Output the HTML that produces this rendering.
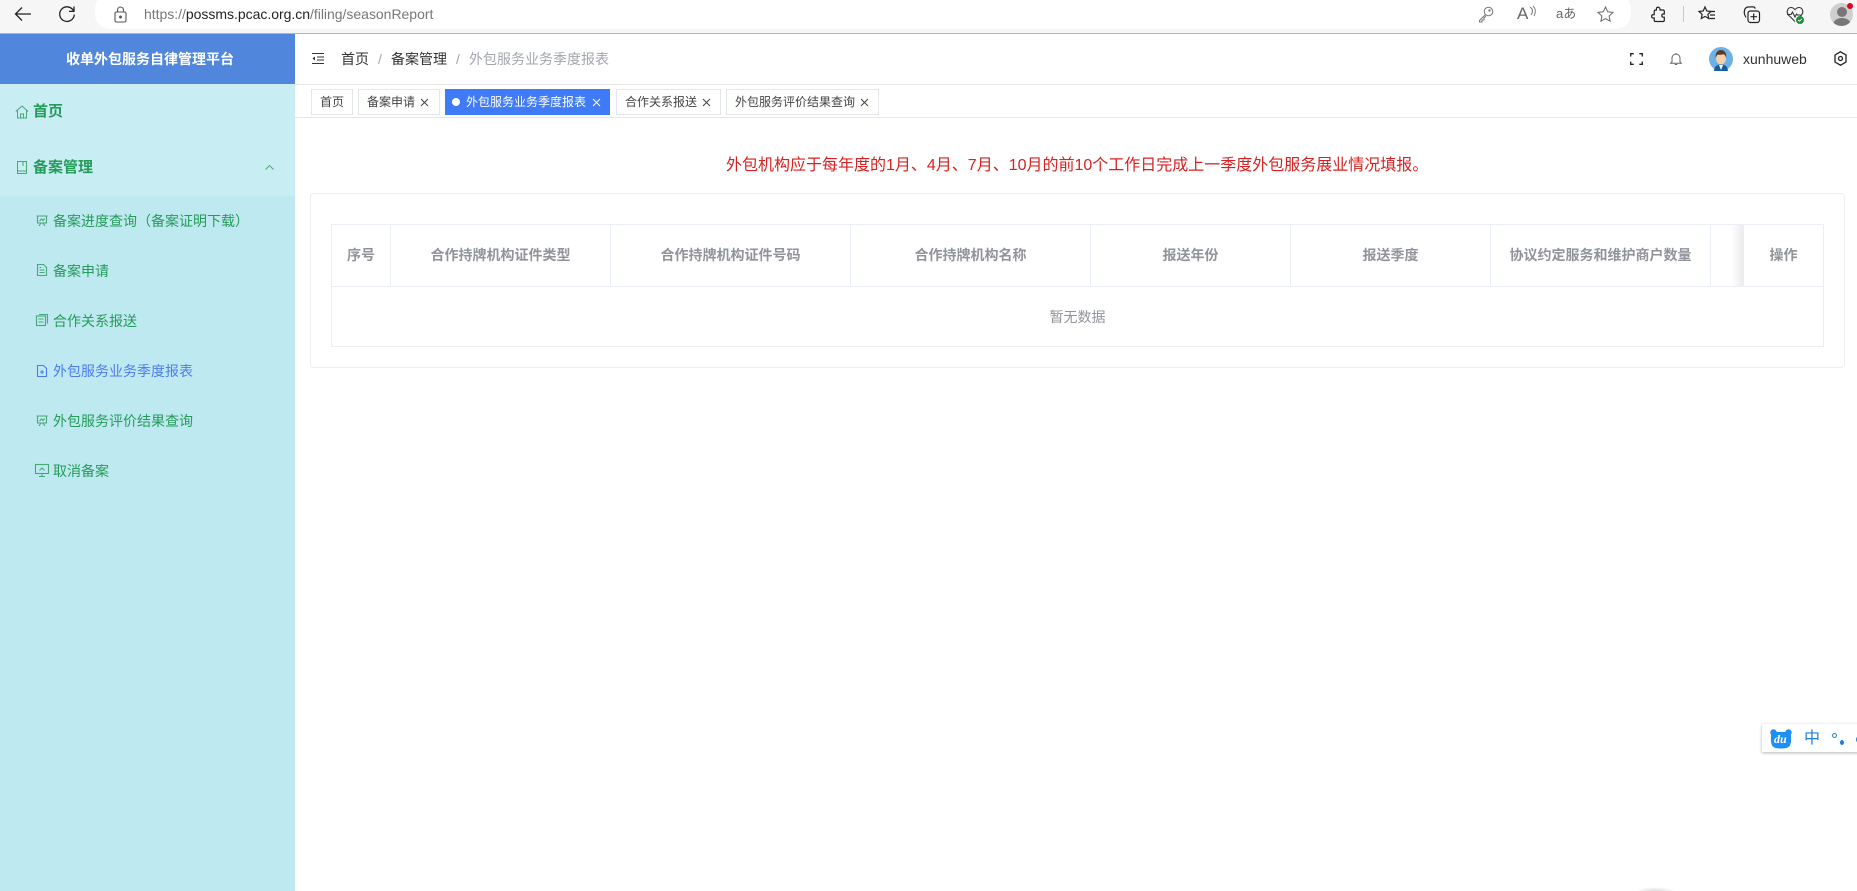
<!DOCTYPE html>
<html lang="zh-CN"><head><meta charset="utf-8"><title>外包服务业务季度报表</title>
<style>
html,body{margin:0;padding:0;background:#fff;width:1857px;height:891px;overflow:hidden}
body{position:relative;font-family:"Liberation Sans","Noto Sans CJK SC",sans-serif;font-size:14px;color:#333}
.a{position:absolute}
.t{position:absolute;white-space:nowrap;line-height:20px;height:20px}
svg{position:absolute;overflow:visible;fill:none}
.tab{position:absolute;top:89px;height:24px;border:1px solid #e3e6ea;font-size:12px;line-height:24px;color:#444;background:#fff;white-space:nowrap}
.tab span{position:absolute;top:0}
.tab svg{top:8px}
.th{position:absolute;top:225px;height:61px;line-height:61px;text-align:center;font-weight:bold;color:#909399;font-size:14px;white-space:nowrap}
.vl{position:absolute;top:225px;height:61px;width:1px;background:#ebeef5}
.m{color:#259b5a}
</style></head><body>
<!-- browser bar -->
<div class="a" style="left:0;top:0;width:1857px;height:34px;background:#f6f6f6;border-bottom:1px solid #b5b5b5;box-sizing:border-box"></div>
<div class="a" style="left:95px;top:-6px;width:1536px;height:35px;background:#fff;border-radius:15px"></div>
<svg style="left:14px;top:5px" width="18" height="18" viewBox="0 0 18 18" stroke="#222" stroke-width="1.3"><path d="M17 9H1.5M8 2.5L1.5 9 8 15.5"/></svg>
<svg style="left:58px;top:5px" width="18" height="18" viewBox="0 0 18 18" stroke="#222" stroke-width="1.3"><path d="M15.6 6A7.3 7.3 0 1 0 16.3 9.5M16 1.5V6.4H11"/></svg>
<svg style="left:114px;top:6px" width="13" height="17" viewBox="0 0 13 17" stroke="#555" stroke-width="1.1"><rect x="1" y="6" width="11" height="10" rx="1.5"/><path d="M3.5 6V4a3 3 0 0 1 6 0v2"/><circle cx="6.5" cy="11" r=".9" fill="#555"/></svg>
<div class="t" style="left:144px;top:4px;font-size:14px;letter-spacing:-.02px;color:#777"><span>https://</span><span style="color:#222">possms.pcac.org.cn</span><span>/filing/seasonReport</span></div>
<svg style="left:1478px;top:6px" width="16" height="17" viewBox="0 0 16 17" stroke="#777" stroke-width="1"><circle cx="10.5" cy="5.5" r="4.3"/><path d="M7.5 8.5L1.5 14.5V16H4V14H6V12L8 10"/><circle cx="11.5" cy="4.5" r=".7" fill="#777"/></svg>
<div class="t" style="left:1517px;top:4px;font-size:17px;color:#666">A</div>
<svg style="left:1529px;top:6px" width="7" height="11" viewBox="0 0 7 11" stroke="#777" stroke-width="1"><path d="M1 1c3 2 3 5 1 8M4 0c3 3 3 6 1 10"/></svg>
<div class="t" style="left:1556px;top:4px;font-size:13px;color:#666;font-family:'Liberation Sans','Noto Sans CJK JP',sans-serif">aあ</div>
<svg style="left:1597px;top:6px" width="17" height="16" viewBox="0 0 17 16" stroke="#666" stroke-width="1"><path d="M8.5 1l2.2 4.8 5.3.6-3.9 3.6 1 5.2-4.6-2.6-4.6 2.6 1-5.2L1 6.4l5.3-.6z"/></svg>
<svg style="left:1650px;top:6px" width="17" height="17" viewBox="0 0 17 17" stroke="#222" stroke-width="1.2"><path d="M7 1.5c1.2-.8 3 0 3 1.7V4h3c.8 0 1.3.6 1.3 1.3V8h-1c-2 0-2 3.200 0 3.200h1v3c0 .8-.6 1.300-1.300 1.300H5.500c-.8 0-1.300-.6-1.300-1.300V12h-.8c-2.400 0-2.400-3.400 0-3.400h.8V5.500C4.200 4.500 5 4 6 4h.4V3c0-.6.200-1.200.6-1.500z"/></svg>
<div class="a" style="left:1683px;top:6px;width:1px;height:16px;background:#c8c8c8"></div>
<svg style="left:1698px;top:6px" width="18" height="17" viewBox="0 0 18 17" stroke="#222" stroke-width="1.2"><path d="M7 1l1.800 4 4.200.5-3.100 2.800.8 4.200L7 10.400 3.300 12.500l.8-4.200L1 5.500 5.200 5z"/><path d="M12 5.500h5M12 9h5M11.500 12.500h5.500"/></svg>
<svg style="left:1743px;top:6px" width="18" height="18" viewBox="0 0 18 18" stroke="#222" stroke-width="1.2"><path d="M3 11.500C1.500 9 1 6 1.500 4.500 2 2 3.500 1.200 5 1l5-.2c1.500 0 2 .8 2.200 1.800"/><rect x="5" y="5" width="11.500" height="11.500" rx="2.500"/><path d="M10.700 7.500v6.500M7.500 10.700H14"/></svg>
<svg style="left:1786px;top:6px" width="19" height="18" viewBox="0 0 19 18" stroke="#333" stroke-width="1.1"><path d="M9 15.500L2.500 9C0 6 1.500 1.500 5 1.500c2 0 3 1 4 2.200 1-1.200 2-2.200 4-2.200 3.500 0 5 4.500 2.500 7.500l-1.500 1.500"/><path d="M1 8.500h4l1.500-2.500 2.500 5 1.500-3 1 1h3"/></svg>
<div class="a" style="left:1796px;top:16px;width:8px;height:8px;border-radius:50%;background:#1f8f3d"></div>
<svg style="left:1797px;top:18px" width="6" height="4" viewBox="0 0 7 5" stroke="#fff" stroke-width="1"><path d="M1 2.500L3 4 6 1"/></svg>
<div class="a" style="left:1830px;top:3px;width:23px;height:23px;border-radius:50%;background:#cfcfcf;overflow:hidden"><div class="a" style="left:7px;top:4px;width:10px;height:10px;border-radius:50%;background:#777"></div><div class="a" style="left:3px;top:15px;width:18px;height:14px;border-radius:50%;background:#777"></div></div>
<div class="a" style="left:1847px;top:3px;width:6px;height:6px;border-radius:50%;background:#e0001b"></div>

<!-- sidebar -->
<div class="a" style="left:0;top:34px;width:295px;height:50px;background:#5087dc"></div>
<div class="t" style="left:66px;top:49px;font-size:14px;font-weight:bold;color:#fff">收单外包服务自律管理平台</div>
<div class="a" style="left:0;top:84px;width:295px;height:807px;background:#c8eef3"></div>
<div class="a" style="left:0;top:196px;width:295px;height:695px;background:#bfe9f0"></div>

<svg style="left:15px;top:105px" width="14" height="14" viewBox="0 0 14 14" stroke="#46a875" stroke-width="1"><path d="M.8 6.500L7 1l6.200 5.500M2.500 5.500V13h9V5.500M5.500 13V9h3v4"/></svg>
<div class="t m" style="left:33px;top:102px;font-size:15px;font-weight:bold">首页</div>
<svg style="left:17px;top:161px" width="10" height="13" viewBox="0 0 10 13" stroke="#46a875" stroke-width="1"><rect x=".5" y=".5" width="9" height="12"/><path d="M.5 10h9M6 .5V5"/></svg>
<div class="t m" style="left:33px;top:158px;font-size:15px;font-weight:bold">备案管理</div>
<svg style="left:265px;top:165px" width="9" height="5" viewBox="0 0 9 5" stroke="#46a875" stroke-width=".9"><path d="M.5 4.500L4.500.5l4 4"/></svg>

<svg style="left:36px;top:215px" width="12" height="12" viewBox="0 0 12 12" stroke="#46a875" stroke-width="1.1"><path d="M.5 1h11M1.500 1v7h9V1M3 11l2-3M9 11L7 8M3.500 6L5.500 4l1.500 1.500L8.500 3.500"/></svg>
<div class="t m" style="left:53px;top:211px">备案进度查询（备案证明下载）</div>
<svg style="left:37px;top:264px" width="10" height="12" viewBox="0 0 10 12" stroke="#46a875" stroke-width="1.1"><path d="M.5.5h6l3 3v8h-9zM2.500 6h5M2.500 8.500h5M2.500 3.500h2"/></svg>
<div class="t m" style="left:53px;top:261px">备案申请</div>
<svg style="left:36px;top:314px" width="12" height="12" viewBox="0 0 12 12" stroke="#46a875" stroke-width="1.1"><rect x=".5" y="2" width="9" height="9.500"/><path d="M3 .5h8.500v9M2.500 5h5M2.500 8h5"/></svg>
<div class="t m" style="left:53px;top:311px">合作关系报送</div>
<svg style="left:37px;top:365px" width="10" height="12" viewBox="0 0 10 12" stroke="#4d7cf0" stroke-width="1.1"><path d="M.5.5h6l3 3v8h-9zM5 5v4M3 7h4"/></svg>
<div class="t" style="left:53px;top:361px;color:#4d7cf0">外包服务业务季度报表</div>
<svg style="left:36px;top:415px" width="12" height="12" viewBox="0 0 12 12" stroke="#46a875" stroke-width="1.1"><path d="M.5 1h11M1.500 1v7h9V1M3 11l2-3M9 11L7 8M3.500 6L5.500 4l1.500 1.500L8.500 3.500"/></svg>
<div class="t m" style="left:53px;top:411px">外包服务评价结果查询</div>
<svg style="left:35px;top:464px" width="14" height="13" viewBox="0 0 14 13" stroke="#46a875" stroke-width="1.1"><rect x=".5" y=".5" width="13" height="9"/><path d="M4 12.500h6M7 9.500v3M4.500 6.500L7 4l2.500 2.500"/></svg>
<div class="t m" style="left:53px;top:461px">取消备案</div>

<!-- header -->
<div class="a" style="left:295px;top:84px;width:1562px;height:1px;background:#e6e6e6"></div>
<svg style="left:312px;top:53px" width="12" height="11" viewBox="0 0 12 11" stroke="#333" stroke-width="1"><path d="M0 .5h12M5 4h7M5 7h7M0 10.500h12"/><path d="M3 3.500L.5 5.500 3 7.500z" fill="#333" stroke="none"/></svg>
<div class="t" style="left:341px;top:49px;color:#303133">首页</div>
<div class="t" style="left:378px;top:49px;color:#a3a6ad">/</div>
<div class="t" style="left:391px;top:49px;color:#303133">备案管理</div>
<div class="t" style="left:456px;top:49px;color:#a3a6ad">/</div>
<div class="t" style="left:469px;top:49px;color:#a3a6ad">外包服务业务季度报表</div>

<svg style="left:1630px;top:53px" width="13" height="12" viewBox="0 0 13 12" stroke="#222" stroke-width="1.300"><path d="M.7 3.500V.7h3M9.300.7h3v2.800M.7 8.500v2.800h3M9.300 11.300h3V8.500"/></svg>
<svg style="left:1670px;top:52px" width="12" height="14" viewBox="0 0 12 14" stroke="#666" stroke-width="1"><path d="M2 10V6a4 4 0 0 1 8 0v4l1.300 1.300H.7zM6 1v1M4.800 12.500h2.400"/></svg>
<svg style="left:1709px;top:47px" width="24" height="24" viewBox="0 0 24 24"><circle cx="12" cy="12" r="12" fill="#6db2e6"/><path d="M5 24c.5-5 3-6.500 7-6.500s6.500 1.500 7 6.500z" fill="#1c5a9e"/><path d="M10 18l2 5 2-5z" fill="#fff"/><ellipse cx="12" cy="11.500" rx="5" ry="6" fill="#f5cfae"/><path d="M6.800 11c-.8-6 2.500-8 5.200-8s6 2 5.200 8c-.6-2.500-1.700-3.500-2.700-3.800-2 .7-5 .7-5.700.3-1 .7-1.500 2-2 3.500z" fill="#5a3a28"/></svg>
<div class="t" style="left:1743px;top:49px;color:#303133;font-size:14px">xunhuweb</div>
<svg style="left:1834px;top:51px" width="13" height="15" viewBox="0 0 13 15" stroke="#222" stroke-width="1.300"><path d="M6.500.8l5.500 3.200v7l-5.500 3.200L1 11V4z"/><circle cx="6.500" cy="7.500" r="2"/></svg>

<!-- tabs -->
<div class="a" style="left:295px;top:117px;width:1562px;height:1px;background:#e6e6e6"></div>
<div class="tab" style="left:311px;width:40px"><span style="left:8px">首页</span></div>
<div class="tab" style="left:358px;width:80px"><span style="left:8px">备案申请</span><svg style="left:61px" width="9" height="9" viewBox="0 0 9 9" stroke="#444"><path d="M1 1l7 7M8 1L1 8"/></svg></div>
<div class="tab" style="left:445px;width:163px;background:#3f7bf6;border-color:#3f7bf6;color:#fff"><span style="left:6px;top:8px;width:8px;height:8px;border-radius:50%;background:#fff"></span><span style="left:20px">外包服务业务季度报表</span><svg style="left:146px" width="9" height="9" viewBox="0 0 9 9" stroke="#fff"><path d="M1 1l7 7M8 1L1 8"/></svg></div>
<div class="tab" style="left:616px;width:103px"><span style="left:8px">合作关系报送</span><svg style="left:85px" width="9" height="9" viewBox="0 0 9 9" stroke="#444"><path d="M1 1l7 7M8 1L1 8"/></svg></div>
<div class="tab" style="left:726px;width:151px"><span style="left:8px">外包服务评价结果查询</span><svg style="left:133px" width="9" height="9" viewBox="0 0 9 9" stroke="#444"><path d="M1 1l7 7M8 1L1 8"/></svg></div>

<!-- notice -->
<div class="t" style="left:726px;top:156px;font-size:16px;line-height:20px;color:#d92020">外包机构应于每年度的1月、4月、7月、10月的前10个工作日完成上一季度外包服务展业情况填报。</div>

<!-- card -->
<div class="a" style="left:310px;top:193px;width:1535px;height:175px;border:1px solid #ebeef5;border-radius:4px;box-sizing:border-box"></div>
<div class="a" style="left:331px;top:224px;width:1493px;height:123px;border:1px solid #ebeef5;box-sizing:border-box"></div>
<div class="a" style="left:332px;top:286px;width:1491px;height:1px;background:#ebeef5"></div>
<div class="vl" style="left:390px"></div><div class="vl" style="left:610px"></div><div class="vl" style="left:850px"></div><div class="vl" style="left:1090px"></div><div class="vl" style="left:1290px"></div><div class="vl" style="left:1490px"></div><div class="vl" style="left:1710px"></div>
<div class="a" style="left:1731px;top:225px;width:12px;height:61px;background:linear-gradient(90deg,rgba(236,236,236,0),#ececec)"></div>
<div class="vl" style="left:1743px"></div>
<div class="th" style="left:332px;width:58px">序号</div>
<div class="th" style="left:391px;width:219px">合作持牌机构证件类型</div>
<div class="th" style="left:611px;width:239px">合作持牌机构证件号码</div>
<div class="th" style="left:851px;width:239px">合作持牌机构名称</div>
<div class="th" style="left:1091px;width:199px">报送年份</div>
<div class="th" style="left:1291px;width:199px">报送季度</div>
<div class="th" style="left:1491px;width:219px">协议约定服务和维护商户数量</div>
<div class="th" style="left:1744px;width:79px">操作</div>
<div class="t" style="left:332px;width:1491px;top:307px;text-align:center;color:#909399;font-size:14px">暂无数据</div>

<!-- IME -->
<div class="a" style="left:1762px;top:724px;width:110px;height:28px;background:#fff;box-shadow:0 1px 3px rgba(0,0,0,.3)"></div>
<svg style="left:1770px;top:729px" width="22" height="20" viewBox="0 0 22 20"><circle cx="3.500" cy="3.500" r="3.200" fill="#1e8ff5"/><circle cx="18.500" cy="3.500" r="3.200" fill="#1e8ff5"/><path d="M1.500 3H20.500c.8 5 .8 9 0 12-1 3.500-4 4.500-9.500 4.500S2.500 18.500 1.500 15c-.8-3-.8-7 0-12z" fill="#1e8ff5"/></svg>
<div class="t" style="left:1774px;top:729px;font:italic bold 12px/20px 'Liberation Serif',serif;color:#fff">du</div>
<div class="t" style="left:1804px;top:729px;font-size:16px;color:#1e7fe0;font-family:'Liberation Sans','Noto Sans CJK SC',sans-serif">中</div>
<div class="a" style="left:1832px;top:733px;width:3px;height:3px;border:1.300px solid #1e7fe0;border-radius:50%"></div>
<div class="a" style="left:1840px;top:740px;width:4px;height:5px;border-radius:50%;background:#1e7fe0"></div>
<div class="a" style="left:1856px;top:736px;width:6px;height:7px;border-radius:50%;background:#1e7fe0"></div>

<!-- bottom shadow -->
<div class="a" style="left:1635px;top:887px;width:40px;height:8px;background:radial-gradient(ellipse at center,rgba(0,0,0,.14),rgba(0,0,0,0) 70%)"></div>
</body></html>
